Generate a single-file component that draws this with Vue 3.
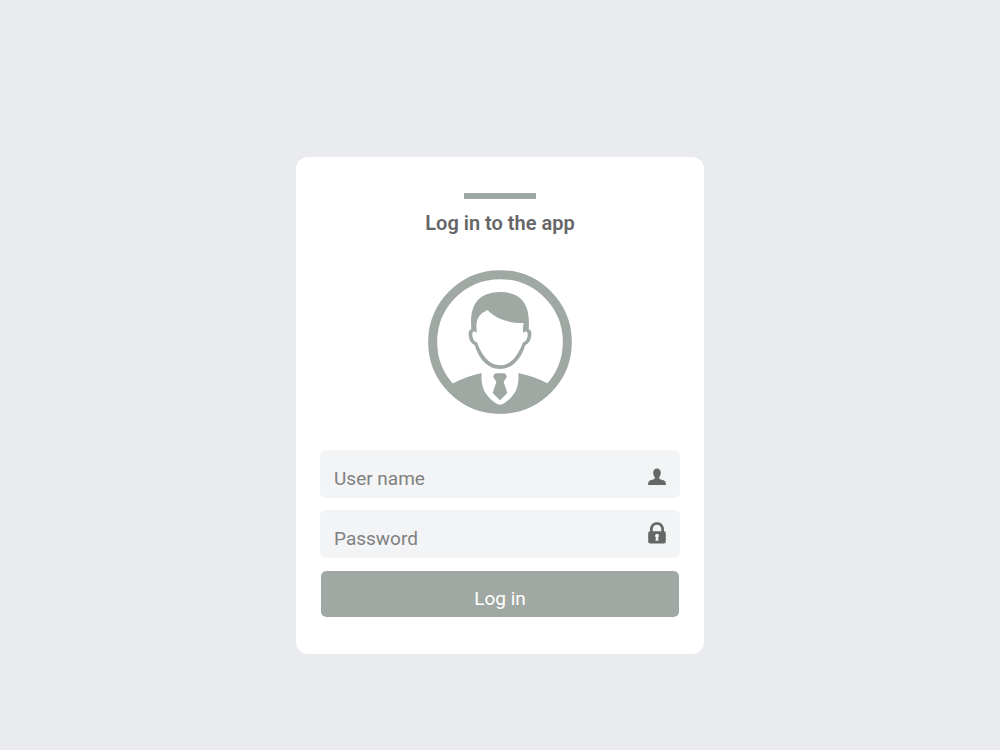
<script setup>
import { ref } from 'vue'

const username = ref('')
const password = ref('')
</script>

<template>
  <main class="page">
    <form class="card" @submit.prevent>
      <span class="accent"></span>
      <h1 class="title">Log in to the app</h1>

      <svg class="avatar" viewBox="26 30 432 432" aria-hidden="true">
        <defs>
          <clipPath id="disc"><circle cx="242" cy="246" r="214" /></clipPath>
        </defs>
        <circle cx="242" cy="246" r="202" fill="none" stroke="#9fa8a2" stroke-width="27" />
        <path
          clip-path="url(#disc)"
          fill="#9fa8a2"
          d="M70 389 L99 371 Q140 349 187 339 Q184 373 196 395 Q216 426 242 436 Q268 426 288 395 Q300 373 297 339 Q346 349 387 371 L414 389 L390 470 H94 Z"
        />
        <path
          fill="#9fa8a2"
          d="M228 340 H256 L263 349 L253 366 L264 399 L242 421 L220 399 L231 366 L221 349 Z"
        />
        <path
          fill="#9fa8a2"
          fill-rule="evenodd"
          d="M156 207 C151 145 168 97 242 96 C316 97 333 145 328 207 C336 210 338 220 335 232 C332 245 327 252 318 255 C306 294 281 327 242 327 C203 327 178 294 166 255 C157 252 152 245 149 232 C146 220 148 210 156 207 Z M173 219 C164 211 158 215 159 226 C160 239 166 245 173 247 C187 285 208 316 242 316 C276 316 297 285 311 247 C318 245 324 239 325 226 C326 215 320 211 311 219 Q310 204 313 189 C268 190 228 176 205 150 Q172 164 171 194 Q171 207 173 219 Z"
        />
      </svg>

      <div class="field">
        <input v-model="username" type="text" placeholder="User name" aria-label="User name" autocomplete="username" />
        <svg class="icon user" viewBox="0 0 18 18" aria-hidden="true">
          <path
            d="M9 0.5 C6.6 0.5 5.2 2.2 5.2 4.6 C5.2 6.6 5.9 8.2 6.8 9.2 V10.4 C6 11.4 2.4 11.9 1.2 13 C0.3 13.9 0.1 15.4 0.1 17 H17.9 C17.9 15.4 17.7 13.9 16.8 13 C15.6 11.9 12 11.4 11.2 10.4 V9.2 C12.1 8.2 12.8 6.6 12.8 4.6 C12.8 2.2 11.4 0.5 9 0.5 Z"
          />
        </svg>
      </div>

      <div class="field">
        <input v-model="password" type="password" placeholder="Password" aria-label="Password" autocomplete="current-password" />
        <svg class="icon lock" viewBox="0 0 18 22" aria-hidden="true">
          <path
            fill-rule="evenodd"
            d="M2 9.3 V7.5 C2 3 5 0.3 9 0.3 C13 0.3 16 3 16 7.5 V9.3 Q17.8 9.5 17.8 11.2 V19.6 Q17.8 21.5 15.9 21.5 H2.1 Q0.2 21.5 0.2 19.6 V11.2 Q0.2 9.5 2 9.3 Z M4.7 9.3 H13.3 V7.5 C13.3 4.6 11.5 2.8 9 2.8 C6.5 2.8 4.7 4.6 4.7 7.5 Z M9 11.8 A2.1 2.1 0 0 0 7.9 15.6 L7.5 18.8 H10.5 L10.1 15.6 A2.1 2.1 0 0 0 9 11.8 Z"
          />
        </svg>
      </div>

      <button class="submit" type="submit">Log in</button>
    </form>
  </main>
</template>

<style>
body {
  background: #e9ebef;
}
</style>

<style scoped>
.page {
  box-sizing: border-box;
  min-height: 100vh;
  padding: 157px 24px 96px;
  background: #e9ebef;
  font-family: Roboto, "Noto Sans", sans-serif;
}

.card {
  box-sizing: border-box;
  display: flex;
  flex-direction: column;
  align-items: center;
  gap: 12px;
  width: 100%;
  max-width: 408px;
  margin: 0 auto;
  padding: 36px 24px;
  border-radius: 12px;
  background: #fff;
}

.accent {
  width: 72px;
  height: 6px;
  background: #9fa8a2;
}

.title {
  margin: 0;
  color: #666;
  font-size: 20px;
  font-weight: 600;
  line-height: 24px;
}

.avatar {
  width: 144px;
  height: 144px;
  margin: 23px 0 24px;
}

.field {
  position: relative;
  width: 100%;
}

.field input {
  box-sizing: border-box;
  display: block;
  width: 100%;
  height: 48px;
  padding: 8px 48px 0 14px;
  border: 0;
  border-radius: 6px;
  outline: none;
  background: #f2f4f6;
  color: #666;
  font: inherit;
  font-size: 19px;
}

.field input::placeholder {
  color: #808080;
  opacity: 1;
}

.icon {
  position: absolute;
  right: 14px;
  width: 18px;
  fill: #666866;
  pointer-events: none;
}

.user {
  top: 18px;
  height: 18px;
}

.lock {
  top: 12px;
  height: 22px;
}

.submit {
  box-sizing: border-box;
  align-self: stretch;
  height: 48px;
  padding: 8px 12px 0;
  border: 1px solid #fff;
  border-radius: 6px;
  background: #9fa8a2;
  background-clip: padding-box;
  color: #fff;
  font: inherit;
  font-size: 19px;
  cursor: pointer;
}
</style>
